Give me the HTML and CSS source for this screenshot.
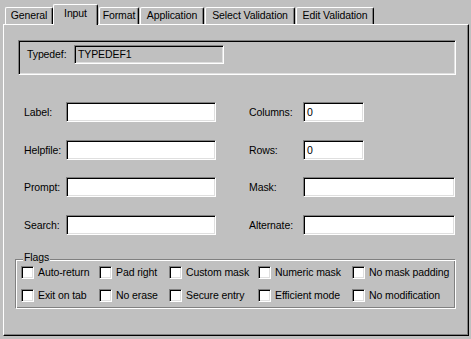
FILE: index.html
```html
<!DOCTYPE html>
<html>
<head>
<meta charset="utf-8">
<link rel="stylesheet" href="styles.css">
</head>
<body>
<div class="dlg">
  <div class="tabs">
    <div class="tab t-general">General</div>
    <div class="tab sel t-input">Input</div>
    <div class="tab t-format">Format</div>
    <div class="tab t-app">Application</div>
    <div class="tab t-selv">Select Validation</div>
    <div class="tab t-edit">Edit Validation</div>
  </div>
  <div class="panel">
    <div class="typedef">
      <span class="tlabel">Typedef:</span>
      <div class="field ro w150">TYPEDEF1</div>
    </div>
    <div class="form">
      <span class="lbl">Label:</span><div class="field w150"></div>
      <span class="lbl">Columns:</span><div class="field w61">0</div>
      <span class="lbl">Helpfile:</span><div class="field w150"></div>
      <span class="lbl">Rows:</span><div class="field w61">0</div>
      <span class="lbl">Prompt:</span><div class="field w150"></div>
      <span class="lbl">Mask:</span><div class="field w152"></div>
      <span class="lbl">Search:</span><div class="field w150"></div>
      <span class="lbl">Alternate:</span><div class="field w152"></div>
    </div>
    <div class="flags">
      <span class="legend">Flags</span>
      <div class="cbgrid">
        <div class="cb"><span class="box"></span>Auto-return</div>
        <div class="cb"><span class="box"></span>Pad right</div>
        <div class="cb"><span class="box"></span>Custom mask</div>
        <div class="cb"><span class="box"></span>Numeric mask</div>
        <div class="cb"><span class="box"></span>No mask padding</div>
        <div class="cb"><span class="box"></span>Exit on tab</div>
        <div class="cb"><span class="box"></span>No erase</div>
        <div class="cb"><span class="box"></span>Secure entry</div>
        <div class="cb"><span class="box"></span>Efficient mode</div>
        <div class="cb"><span class="box"></span>No modification</div>
      </div>
    </div>
  </div>
</div>
</body>
</html>
```

FILE: styles.css
```css
html, body {
  margin: 0;
  padding: 0;
  background: #c0c0c0;
}
body {
  font-family: "Liberation Sans", Arial, sans-serif;
  font-size: 10.5px;
  letter-spacing: -0.1px;
  color: #000;
  width: 471px;
  height: 339px;
  overflow: hidden;
}
.dlg {
  padding-left: 3px;
}
.tabs {
  display: flex;
  align-items: flex-end;
  height: 24px;
  padding-left: 2px;
}
.tab {
  box-sizing: border-box;
  height: 17px;
  border-top: 1px solid #fff;
  border-left: 1px solid #fff;
  border-right: 1px solid #000;
  box-shadow: inset -1px 0 #808080;
  border-radius: 2px 2px 0 0;
  line-height: 15px;
  text-align: center;
  white-space: nowrap;
  margin-right: 1px;
  background: #c0c0c0;
}
.t-general { width: 48px; margin-right: 0; }
.t-input { width: 45px; }
.t-format { width: 40px; }
.t-app { width: 64px; }
.t-selv { width: 90px; }
.t-edit { width: 78px; }
.tab.sel {
  height: 21px;
  margin-bottom: -1px;
  padding-top: 1px;
  position: relative;
  z-index: 1;
}
.panel {
  box-sizing: border-box;
  width: 466px;
  height: 312px;
  border-top: 1px solid #fff;
  border-left: 1px solid #fff;
  border-right: 1px solid #000;
  border-bottom: 1px solid #000;
  box-shadow: inset -1px -1px #808080;
  padding: 15px 0 0 11px;
}
.typedef {
  box-sizing: border-box;
  margin-left: 3px;
  width: 438px;
  height: 35px;
  border-top: 1px solid #808080;
  border-left: 1px solid #808080;
  border-bottom: 1px solid #fff;
  border-right: 1px solid #fff;
  box-shadow: inset 1px 1px #000, inset -1px -1px #dfdfdf;
  display: flex;
  align-items: flex-start;
  padding: 4px 0 0 8px;
}
.tlabel {
  width: 47px;
  line-height: 19px;
}
.field {
  box-sizing: border-box;
  height: 20px;
  border-top: 1px solid #808080;
  border-left: 1px solid #808080;
  border-bottom: 1px solid #fff;
  border-right: 1px solid #fff;
  box-shadow: inset 1px 1px #000, inset -1px -1px #dfdfdf;
  background: #fff;
  padding-left: 3px;
  line-height: 18px;
}
.field.ro {
  background: #c0c0c0;
  height: 19px;
  line-height: 17px;
}
.w150 { width: 150px; }
.w61 { width: 61px; }
.w152 { width: 152px; }
.form {
  margin: 27px 0 0 9px;
  display: grid;
  grid-template-columns: 42px 183px 54px 152px;
  grid-template-rows: 38px 37px 38px 20px;
  align-items: start;
}
.lbl {
  line-height: 20px;
  white-space: nowrap;
}
.flags {
  position: relative;
  box-sizing: border-box;
  margin-top: 24px;
  width: 441px;
  height: 50px;
  border-top: 1px solid #808080;
  border-left: 1px solid #808080;
  border-bottom: 1px solid #fff;
  border-right: 1px solid #fff;
  box-shadow: inset 1px 1px #fff, inset -1px -1px #808080;
  padding: 6px 0 0 5px;
}
.legend {
  position: absolute;
  top: -9px;
  left: 7px;
  padding: 0 1px;
  line-height: 12px;
  background: #c0c0c0;
}
.cbgrid {
  display: grid;
  grid-template-columns: 78px 70px 89px 94px auto;
  grid-auto-rows: 13px;
  row-gap: 10px;
}
.cb {
  display: flex;
  align-items: center;
  gap: 4px;
  height: 13px;
  line-height: 13px;
  white-space: nowrap;
}
.box {
  box-sizing: border-box;
  flex: none;
  width: 13px;
  height: 13px;
  border-top: 1px solid #808080;
  border-left: 1px solid #808080;
  border-bottom: 1px solid #fff;
  border-right: 1px solid #fff;
  box-shadow: inset 1px 1px #000, inset -1px -1px #dfdfdf;
  background: #fff;
}
```
